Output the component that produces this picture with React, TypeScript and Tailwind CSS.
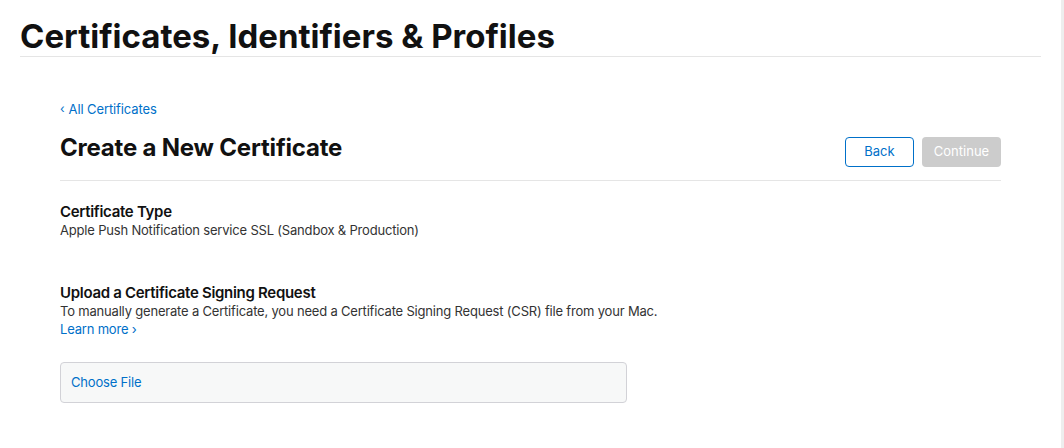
import React from 'react';

const font = { fontFamily: 'Inter, "Noto Sans", sans-serif' };

export default function App() {
  return (
    <div className="w-[1064px] h-[448px] bg-white flex overflow-hidden text-[#111]" style={font}>
      <div className="flex-1 flex flex-col pl-5 pr-5">
        {/* Page title */}
        <div className="pt-[18px] pb-[2px] border-b border-[#e5e5e5]">
          <h1 className="text-[33px] leading-[36px] font-bold text-[#111]">
            Certificates, Identifiers &amp; Profiles
          </h1>
        </div>

        <div className="ml-10 pt-[43px] w-[941px]">
          <a className="text-[13px] leading-[18px] text-[#0070c9] flex items-center gap-[4px] tracking-[-0.1px]">
            <span className="text-[12px]">‹</span> All Certificates
          </a>

          <div className="flex items-end justify-between mt-[17px] pb-[13px] border-b border-[#e5e5e5]">
            <h2 className="text-[24px] leading-[26px] font-bold tracking-[-0.2px] mb-[6px]">
              Create a New Certificate
            </h2>
            <div className="flex gap-2">
              <button className="w-[69px] h-[30px] rounded-[4px] border border-[#0070c9] text-[#0070c9] text-[13px]">
                Back
              </button>
              <button className="w-[79px] h-[30px] rounded-[4px] bg-[#cccccc] text-white text-[13px]">
                Continue
              </button>
            </div>
          </div>

          <div className="mt-[22px]">
            <h3 className="text-[15px] leading-[18px] font-semibold tracking-[-0.3px]">Certificate Type</h3>
            <p className="text-[13px] leading-[18px] text-[#333] tracking-[-0.19px]">
              Apple Push Notification service SSL (Sandbox &amp; Production)
            </p>
          </div>

          <div className="mt-[45px]">
            <h3 className="text-[15px] leading-[18px] font-semibold tracking-[-0.3px]">
              Upload a Certificate Signing Request
            </h3>
            <p className="text-[13px] leading-[18px] text-[#333] tracking-[-0.19px]">
              To manually generate a Certificate, you need a Certificate Signing Request (CSR) file from your Mac.
            </p>
            <a className="block text-[13px] leading-[18px] text-[#0070c9] tracking-[-0.19px]">Learn more ›</a>

            <div className="mt-[24px] w-[567px] h-[41px] rounded-[4px] border border-[#d2d2d7] bg-[#f7f8f8] flex items-center px-[10px]">
              <span className="text-[13px] text-[#0070c9] tracking-[-0.19px] mt-[1px]">Choose File</span>
            </div>
          </div>
        </div>
      </div>
      <div className="w-[3px] bg-[#eeeeee]" />
    </div>
  );
}
